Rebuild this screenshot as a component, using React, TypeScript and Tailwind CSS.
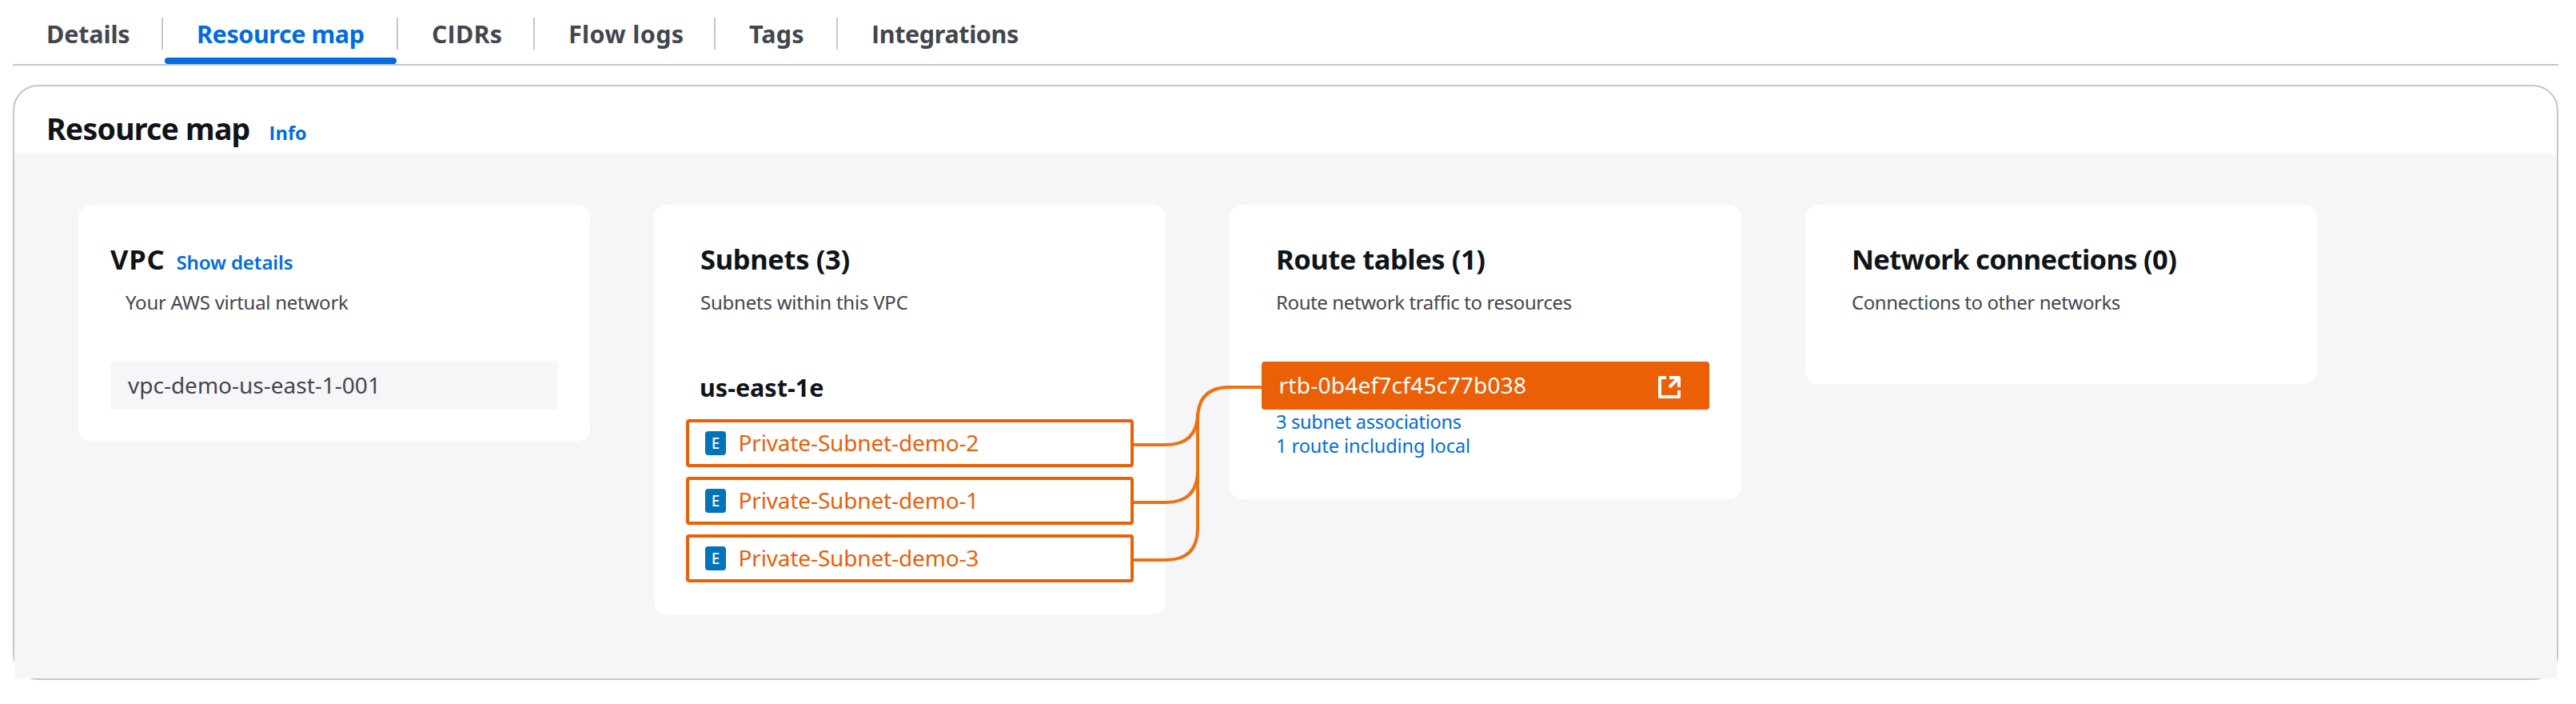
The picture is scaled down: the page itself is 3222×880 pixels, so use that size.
import type { ReactNode } from "react";

const tabs: { label: ReactNode; width: string; text: string; active?: boolean }[] = [
  { label: "Details", width: "w-[188px]", text: "tracking-[-0.15px]" },
  { label: "Resource map", width: "w-[294px]", text: "tracking-[-0.42px]", active: true },
  { label: "CIDRs", width: "w-[171px]", text: "font-['Open_Sans',sans-serif] tracking-[0.1px]" },
  { label: "Flow logs", width: "w-[226px]", text: "tracking-[0.38px]" },
  { label: "Tags", width: "w-[153px]", text: "tracking-[0.15px]" },
  {
    label: (
      <>
        <span className="font-['Open_Sans',sans-serif]">I</span>ntegrations
      </>
    ),
    width: "w-[270px]",
    text: "tracking-[-0.38px]",
  },
];

function Tabs() {
  return (
    <nav className="flex h-[82px] border-b-2 border-[#c6c6cd] pt-[22px]">
      {tabs.map((tab, i) => (
        <div
          key={i}
          className={`relative h-10 shrink-0 whitespace-nowrap pl-[42px] text-[30.5px] leading-10 font-bold ${tab.width} ${tab.text} ${
            i < tabs.length - 1 ? "border-r-2 border-[#c6c6cd]" : ""
          } ${tab.active ? "text-[#006ce0]" : "text-[#424650]"}`}
        >
          {tab.label}
          {tab.active && <span className="absolute top-[50px] left-[2px] h-2 w-[290px] rounded bg-[#006ce0]" />}
        </div>
      ))}
    </nav>
  );
}

function Card({ className, children }: { className: string; children: ReactNode }) {
  return <section className={`w-[640px] rounded-2xl bg-white px-10 pt-12 ${className}`}>{children}</section>;
}

function Heading({ className, children }: { className: string; children: ReactNode }) {
  return (
    <h2 className={`text-[34.5px] leading-10 font-bold whitespace-nowrap text-[#0f141a] ${className}`}>{children}</h2>
  );
}

function Description({ className, children }: { className: string; children: ReactNode }) {
  return (
    <p className={`mt-[18px] text-[24px] leading-8 whitespace-nowrap text-[#424650] ${className}`}>
      {children}
    </p>
  );
}

function SubnetItem({ name }: { name: string }) {
  return (
    <div className="flex h-[60px] w-[560px] items-center rounded border-4 border-[#eb5f07] bg-white pl-5">
      <span className="flex h-[30px] w-[26px] items-center justify-center rounded bg-[#0073bb] text-[19px] leading-none font-medium text-white">
        E
      </span>
      <span className="ml-[15.5px] pb-[2px] text-[28px] leading-9 tracking-[-0.15px] text-[#eb5f07]">
        {name}
      </span>
    </div>
  );
}

function ExternalIcon() {
  return (
    <svg width="28" height="28" viewBox="0 0 28 28" fill="none" stroke="white" strokeWidth="4" strokeLinejoin="round">
      <path d="M10 2H2V26H26V18" />
      <path d="M14 2H26V14" />
      <path d="M25 3L14 14" />
    </svg>
  );
}

function Connectors() {
  return (
    <svg
      className="absolute top-[260px] left-[1400px]"
      width="160"
      height="270"
      viewBox="0 0 160 270"
      fill="none"
      stroke="#ec7211"
      strokeWidth="4"
    >
      <path d="M0 104H40Q80 104 80 64" />
      <path d="M0 176H40Q80 176 80 136" />
      <path d="M0 248H40Q80 248 80 208V72Q80 32 120 32H160" />
    </svg>
  );
}

export default function App() {
  return (
    <main className="h-[880px] w-[3222px] overflow-hidden bg-white pl-4 font-['Noto_Sans',sans-serif]">
      <div className="w-[3184px]">
        <Tabs />
        <div className="mt-6 h-[744px] rounded-[32px] border-2 border-[#c6c6cd] bg-white">
          <header className="flex h-[84px] items-baseline pt-[31px] pl-10">
            <h1 className="text-[37.5px] leading-[44px] font-bold tracking-[-0.78px] text-[#0f141a]">Resource map</h1>
            <a className="ml-[24px] font-['Open_Sans',sans-serif] text-[23.5px] leading-8 font-bold tracking-[0.1px] text-[#006ce0]">
              Info
            </a>
          </header>
          <div className="relative flex h-[656px] items-start gap-20 bg-[#f6f6f9] pt-16 pl-20">
            <Card className="h-[296px]">
              <div className="flex h-10 items-baseline">
                <Heading className="tracking-[0.8px]">VPC</Heading>
                <a className="ml-[14px] text-[24px] leading-8 font-semibold tracking-[-0.1px] whitespace-nowrap text-[#006ce0]">
                  Show details
                </a>
              </div>
              <Description className="pl-[19px] tracking-[-0.26px]">Your AWS virtual network</Description>
              <div className="mt-[58px] flex h-[60px] items-center rounded bg-[#f6f6f9] pb-[2px] pl-[22px] text-[28px] tracking-[0px] text-[#424650]">
                vpc-demo-us-east-1-001
              </div>
            </Card>

            <Card className="h-[512px]">
              <Heading className="pl-[18px] tracking-[-0.35px]">Subnets (3)</Heading>
              <Description className="pl-[18px] tracking-[-0.23px]">Subnets within this VPC</Description>
              <h3 className="mt-[70px] pl-[17px] text-[30.5px] leading-10 font-bold tracking-[0px] text-[#0f141a]">
                us-east-1e
              </h3>
              <div className="mt-5 flex flex-col gap-3">
                <SubnetItem name="Private-Subnet-demo-2" />
                <SubnetItem name="Private-Subnet-demo-1" />
                <SubnetItem name="Private-Subnet-demo-3" />
              </div>
            </Card>

            <Card className="h-[368px]">
              <Heading className="pl-[18px] tracking-[-0.47px]">Route tables (1)</Heading>
              <Description className="pl-[18px] tracking-[-0.4px]">Route network traffic to resources</Description>
              <div className="mt-[58px] flex h-[60px] items-center justify-between rounded bg-[#eb5f07] pr-9 pl-[21.5px] text-[28px] tracking-[0.25px] text-white">
                <span className="pb-[2px]">rtb-0b4ef7cf45c77b038</span>
                <span className="pt-1">
                  <ExternalIcon />
                </span>
              </div>
              <div className="flex flex-col pl-[18px] text-[23.5px] leading-[30px] text-[#006ce0]">
                <a className="tracking-[-0.26px]">3 subnet associations</a>
                <a className="tracking-[-0.05px]">1 route including local</a>
              </div>
            </Card>

            <Card className="h-[224px]">
              <Heading className="pl-[18px] tracking-[-0.68px]">Network connections (0)</Heading>
              <Description className="pl-[18px] tracking-[-0.42px]">Connections to other networks</Description>
            </Card>

            <Connectors />
          </div>
        </div>
      </div>
    </main>
  );
}
